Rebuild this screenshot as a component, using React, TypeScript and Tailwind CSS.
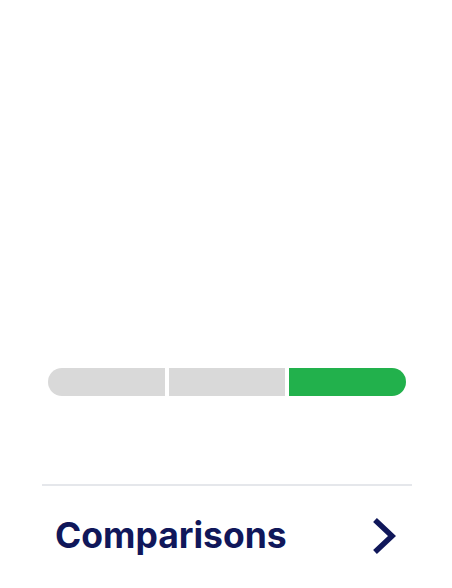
import React from "react";

export default function App() {
  return (
    <div className="w-[452px] h-[588px] bg-white overflow-hidden" style={{ fontFamily: "Inter, 'Noto Sans', sans-serif" }}>
      <div className="pt-[368px] pl-[48px] pr-[46px]">
        <div className="grid grid-cols-3 gap-1 h-[28px]">
          <div className="bg-[#d9d9d9] rounded-l-full" />
          <div className="bg-[#d9d9d9]" />
          <div className="bg-[#22b14c] rounded-r-full" />
        </div>
      </div>
      <div className="mt-[88px] ml-[42px] mr-[40px] border-t-2 border-[#e5e7eb]" />
      <div className="flex items-center justify-between pl-[55px] pr-[56px] pt-[28px]">
        <span className="text-[35.5px] font-bold text-[#10175a] leading-[44px]">Comparisons</span>
        <svg width="24" height="36" viewBox="0 0 24 36" fill="none">
          <path d="M3 2 L20 18 L3 34" stroke="#10175a" strokeWidth="5.5" strokeLinejoin="miter" />
        </svg>
      </div>
    </div>
  );
}
